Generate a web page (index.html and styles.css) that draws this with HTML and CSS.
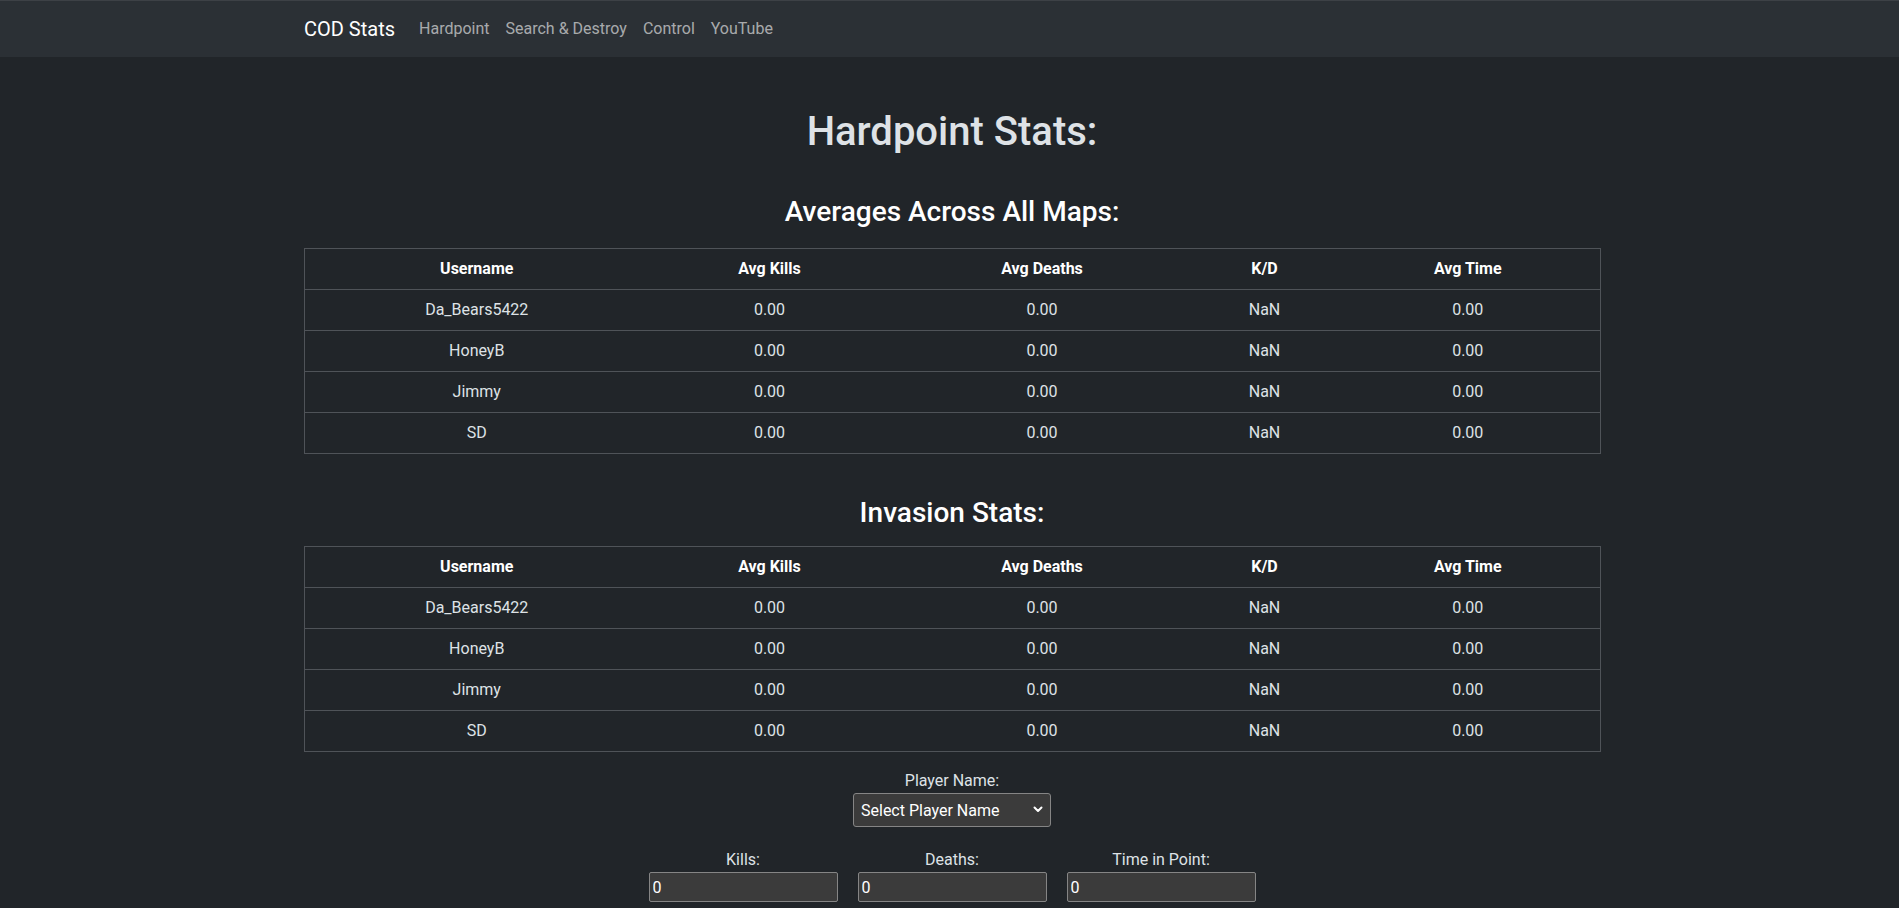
FILE: index.html
```html
<!DOCTYPE html>
<html lang="en">
<head>
<meta charset="utf-8">
<title>COD Stats</title>
<link rel="stylesheet" href="styles.css">
</head>
<body>
<nav class="navbar">
  <div class="container nav-inner">
    <a class="brand" href="#">COD Stats</a>
    <ul class="nav-links">
      <li><a href="#">Hardpoint</a></li>
      <li><a href="#">Search &amp; Destroy</a></li>
      <li><a href="#">Control</a></li>
      <li><a href="#">YouTube</a></li>
    </ul>
  </div>
</nav>

<main class="container">
  <h1 class="page-title">Hardpoint Stats:</h1>

  <h3 class="section-title">Averages Across All Maps:</h3>
  <table class="stats">
    <colgroup>
      <col class="c-user"><col class="c-kills"><col class="c-deaths"><col class="c-kd"><col class="c-time">
    </colgroup>
    <thead>
      <tr><th>Username</th><th>Avg Kills</th><th>Avg Deaths</th><th>K/D</th><th>Avg Time</th></tr>
    </thead>
    <tbody>
      <tr><td>Da_Bears5422</td><td>0.00</td><td>0.00</td><td>NaN</td><td>0.00</td></tr>
      <tr><td>HoneyB</td><td>0.00</td><td>0.00</td><td>NaN</td><td>0.00</td></tr>
      <tr><td>Jimmy</td><td>0.00</td><td>0.00</td><td>NaN</td><td>0.00</td></tr>
      <tr><td>SD</td><td>0.00</td><td>0.00</td><td>NaN</td><td>0.00</td></tr>
    </tbody>
  </table>

  <h3 class="section-title spaced">Invasion Stats:</h3>
  <table class="stats">
    <colgroup>
      <col class="c-user"><col class="c-kills"><col class="c-deaths"><col class="c-kd"><col class="c-time">
    </colgroup>
    <thead>
      <tr><th>Username</th><th>Avg Kills</th><th>Avg Deaths</th><th>K/D</th><th>Avg Time</th></tr>
    </thead>
    <tbody>
      <tr><td>Da_Bears5422</td><td>0.00</td><td>0.00</td><td>NaN</td><td>0.00</td></tr>
      <tr><td>HoneyB</td><td>0.00</td><td>0.00</td><td>NaN</td><td>0.00</td></tr>
      <tr><td>Jimmy</td><td>0.00</td><td>0.00</td><td>NaN</td><td>0.00</td></tr>
      <tr><td>SD</td><td>0.00</td><td>0.00</td><td>NaN</td><td>0.00</td></tr>
    </tbody>
  </table>

  <form class="entry">
    <div class="field">
      <label for="player">Player Name:</label>
      <div class="select-wrap">
        <select id="player" class="select">
          <option>Select Player Name</option>
          <option>Da_Bears5422</option>
          <option>HoneyB</option>
          <option>Jimmy</option>
          <option>SD</option>
        </select>
        <svg class="chevron" width="10" height="7" viewBox="0 0 10 7" aria-hidden="true"><path d="M1.5 1.5 L5 5 L8.5 1.5" fill="none" stroke="#ffffff" stroke-width="2" stroke-linecap="round" stroke-linejoin="round"/></svg>
      </div>
    </div>
    <div class="field-row">
      <div class="field">
        <label for="kills">Kills:</label>
        <input id="kills" class="num" type="text" value="0">
      </div>
      <div class="field">
        <label for="deaths">Deaths:</label>
        <input id="deaths" class="num" type="text" value="0">
      </div>
      <div class="field">
        <label for="time">Time in Point:</label>
        <input id="time" class="num" type="text" value="0">
      </div>
    </div>
  </form>
</main>
</body>
</html>
```

FILE: styles.css
```css
* { box-sizing: border-box; }

html, body {
  margin: 0;
  padding: 0;
}

body {
  background: #212529;
  color: #dee2e6;
  font-family: Roboto, "Liberation Sans", sans-serif;
  font-size: 16px;
  line-height: 1.5;
  color-scheme: dark;
  padding-left: 5px;
}

.container {
  width: 100%;
  max-width: 1320px;
  margin: 0 auto;
  padding: 0 12px;
}

/* Navbar */
.navbar {
  background: #2b3035;
  border-top: 1px solid #3d4146;
  height: 57px;
  margin-left: -5px;
  padding-left: 5px;
}

.nav-inner {
  display: flex;
  align-items: center;
  height: 56px;
}

.brand {
  font-size: 20px;
  line-height: 30px;
  color: #ffffff;
  text-decoration: none;
  margin-right: 16px;
}

.nav-links {
  display: flex;
  list-style: none;
  margin: 0;
  padding: 0;
}

.nav-links a {
  display: block;
  padding: 8px 8px;
  color: rgba(255, 255, 255, 0.6);
  text-decoration: none;
  font-size: 16px;
  line-height: 24px;
}

/* Headings */
.page-title {
  margin: 51px 0 39px;
  font-size: 40px;
  line-height: 48px;
  font-weight: 500;
  text-align: center;
  color: #dee2e6;
}

.section-title {
  margin: 0 0 19px;
  font-size: 28px;
  line-height: 33.6px;
  font-weight: 500;
  text-align: center;
  color: #ffffff;
}

.section-title.spaced {
  margin-top: 42px;
  margin-bottom: 17px;
}

/* Tables */
.stats {
  width: 100%;
  table-layout: fixed;
  border-collapse: collapse;
  border: 1px solid #4f5358;
}

.c-user { width: 344px; }
.c-kills { width: 242px; }
.c-deaths { width: 303px; }
.c-kd { width: 142px; }
.c-time { width: 265px; }

.stats th,
.stats td {
  padding: 8px;
  text-align: center;
  line-height: 24px;
  border-bottom: 1px solid #4f5358;
}

.stats th {
  font-weight: 700;
  color: #ffffff;
}

.stats td {
  color: #dee2e6;
}

/* Form */
.entry {
  margin-top: 17px;
  display: flex;
  flex-direction: column;
  align-items: center;
}

.field {
  display: flex;
  flex-direction: column;
  align-items: center;
}

.field label {
  font-size: 16px;
  line-height: 24px;
  color: #dee2e6;
}

.select-wrap {
  position: relative;
  width: 198px;
}

.select {
  appearance: none;
  -webkit-appearance: none;
  width: 198px;
  height: 34px;
  padding: 0 24px 0 7px;
  background: #3b3b3b;
  color: #ffffff;
  border: 1px solid #858585;
  border-radius: 3px;
  font-family: Roboto, "Liberation Sans", sans-serif;
  font-size: 16px;
}

.chevron {
  position: absolute;
  right: 8px;
  top: 13px;
  pointer-events: none;
}

.field-row {
  display: flex;
  gap: 20px;
  margin-top: 21px;
}

.num {
  width: 189px;
  height: 30px;
  padding: 1px 3px;
  background: #3b3b3b;
  color: #ffffff;
  border: 1px solid #858585;
  border-radius: 2px;
  font-family: Roboto, "Liberation Sans", sans-serif;
  font-size: 16px;
}
```
